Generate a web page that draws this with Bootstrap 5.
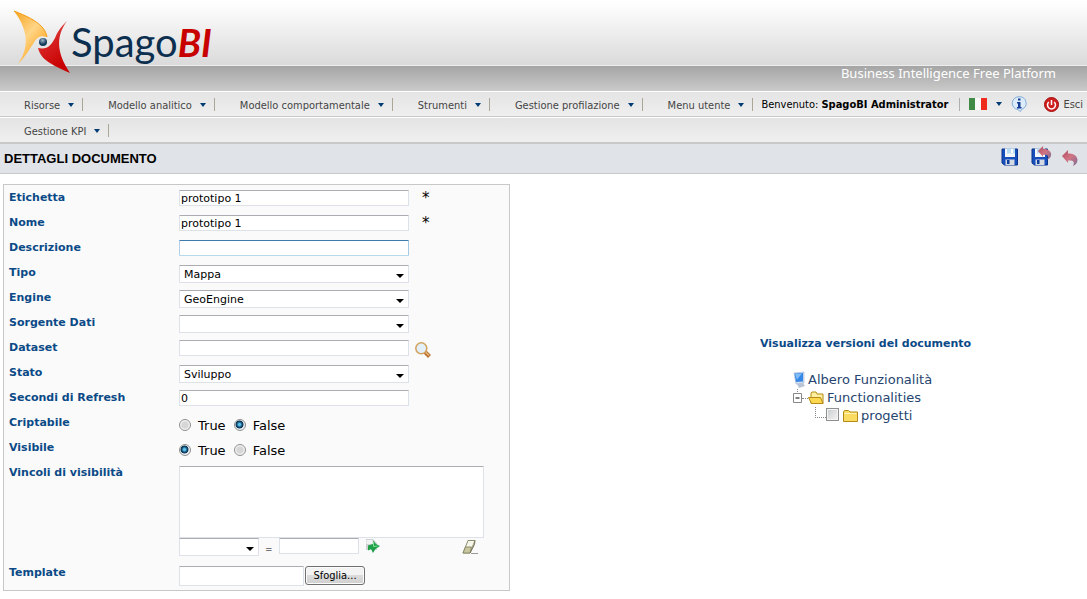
<!DOCTYPE html>
<html lang="it">
<head>
<meta charset="utf-8">
<meta name="viewport" content="width=device-width, initial-scale=1">
<title>SpagoBI - Dettagli documento</title>
<link href="https://cdn.jsdelivr.net/npm/bootstrap@5.3.0/dist/css/bootstrap.min.css" rel="stylesheet">
<style>
:root { --verdana: "DejaVu Sans", Verdana, sans-serif; --tahoma: "DejaVu Sans Condensed", "DejaVu Sans", Tahoma, sans-serif; }
body { font-family: var(--verdana); font-size: 11px; line-height: 15px; color: #000; }
svg { display: block; flex: none; }
.site-head { height: 66px; background: linear-gradient(#fff 0%, #fbfbfb 15%, #dadada 100%); border-bottom: 1px solid #ededed; }
.brand-link { padding: 10px 0 0 13px; text-decoration: none; }
.brand-mark { width: 58px; height: 64px; }
.wordmark { font: 40px/44px "Lato", sans-serif; color: #0c2f50; padding-top: 10px; }
.wordmark b { font-weight: 700; font-style: italic; color: #c80000; font-size: 38px; }
.tagline-bar { height: 25px; background: linear-gradient(#a5a5a5, #cacaca); padding: 0 31px; color: #fff; font: 400 13px/15px "Noto Sans", sans-serif; }
.menu-row { height: 26px; border-top: 1px solid #fff; border-bottom: 1px solid #c8c8c8; background: linear-gradient(#e4e4e4, #efefef); font-family: var(--tahoma); }
.menu-row + .menu-row { border-bottom: 2px solid #c8c8c8; height: 27px; }
.menu-btn { border: 0; background: none; padding: 2px 0 0; color: #454545; font-size: 11px; line-height: 15px; gap: 8px; white-space: nowrap; }
.menu-item { height: 13px; border-right: 1px solid #aaa698; padding: 0 8px 0 25px; }
.menu-item:first-child { padding-left: 24px; }
.tri { width: 0; height: 0; border: 3px solid transparent; border-top: 4px solid #003b73; border-bottom: 0; }
.user-end { gap: 9px; padding-right: 4px; }
.user-end .vr { height: 13px; align-self: center; }
.user-end .menu-btn { padding: 0; gap: 9px; }
.exit-link { color: #454545; text-decoration: none; gap: 4px; margin-left: 8px; }
.icon-btn { border: 0; background: none; padding: 0; }
.title-bar { height: 30px; background: #e0e3e8; border-bottom: 1px solid #c8c8c8; padding: 0 8px 0 4px; }
.title-bar h1 { font: bold 13px/16px "Liberation Sans", Arial, sans-serif; margin: 0; }
.form-pane { width: 60%; padding: 10px 0 8px 3px; }
.doc-form { width: 507px; max-width: 100%; border: 1px solid #c8c8c8; background: #fafafa; padding: 0 5px 4px; }
.frow { display: grid; grid-template-columns: 170px 1fr; min-height: 25px; padding-top: 5px; }
.frow > :first-child { font-weight: bold; color: #0b4a87; line-height: 15px; }
.fld { display: block; width: 230px; height: 16px; border: 1px solid #dde1ea; border-top-color: #abadb3; border-radius: 1px; background: #fff; color: #000; font-size: 11px; line-height: 14px; padding: 0 1px; outline: 0; }
.fld:focus { border-color: #3d7bad #a4c9e3 #b7d9ed #b5cfe7; }
select.fld { height: 18px; appearance: none; padding: 1px 20px 0 4px; line-height: 16px; background: #fff url("data:image/svg+xml,%3Csvg xmlns='http://www.w3.org/2000/svg' width='8' height='4'%3E%3Cpath d='M0 0h8L4 4z'/%3E%3C/svg%3E") no-repeat right 4px top 8px; }
.short-fld { width: 80px; }
.file-fld { width: 125px; height: 20px; }
textarea.fld { width: 305px; height: 72px; resize: none; }
.cell-low { padding-top: 1px; }
.star { font-size: 15px; line-height: 16px; margin-left: 13px; }
.radio-line { font-size: 13px; line-height: 18px; padding-top: 2px; }
.radio-line label { margin: 0 8px 0 7px; }
.radio-line input { appearance: none; width: 12px; height: 12px; border: 1px solid #8e8f8f; border-radius: 50%; margin: 0 0 2px; background: radial-gradient(#d6d6d6 40%, #fff 75%); }
.radio-line input:checked { background: radial-gradient(circle at 45% 45%, #62c4ea 0 12%, #155b86 32%, #0a2b46 46%, #e8eef2 56%); }
.bound-line { gap: 6px; padding-right: 25px; }
.bound-line > span { padding-top: 5px; font-size: 9px; line-height: 12px; }
.browse { border: 1px solid #707070; border-radius: 3px; background: linear-gradient(#f3f3f3 0 45%, #dcdcdc 50%, #cfcfcf); box-shadow: inset 0 0 0 1px #fbfbfb; width: 60px; height: 19px; padding: 0; font-size: 11px; line-height: 15px; font-family: var(--tahoma); margin-left: 1px; }
.find-btn { margin-left: 6px; }
.tree-pane { padding-right: 8px; margin-top: 162px; }
.versions { font-weight: bold; color: #0b4a87; text-decoration: none; }
.tree { font-size: 13px; line-height: 18px; color: #26456f; margin-top: 20px; width: 149px; }
.tree ul { list-style: none; margin: 0; padding: 0; }
.tnode { height: 18px; }
.tree svg { margin-right: -1px; }
.expander { margin-left: 2px; }
.dots-h { border-top: 1px dotted #888; width: 6px; }
.elbow { border-left: 1px dotted #888; border-bottom: 1px dotted #888; width: 11px; height: 11px; margin: 0 0 8px 24px; }
.tree input { appearance: none; width: 13px; height: 13px; margin: 0 4px 4px 0; border: 1px solid #8e8f8f; background: linear-gradient(135deg, #c8ccd0, #f4f4f4); box-shadow: inset 0 0 0 1px #f4f4f4; }
.tree label { margin-left: 2px; }
</style>
</head>
<body>
<header>
  <div class="site-head d-flex align-items-start">
    <a class="brand-link d-flex position-relative" href="#">
      <svg class="brand-mark" viewBox="0 0 58 64" aria-hidden="true">
        <defs>
          <linearGradient id="og" x1="0" y1="0" x2=".7" y2="1"><stop offset="0" stop-color="#f5a21b"/><stop offset=".5" stop-color="#ffd587"/><stop offset="1" stop-color="#ff9d0a"/></linearGradient>
          <linearGradient id="rg" x1="0" y1="0" x2=".5" y2="1"><stop offset="0" stop-color="#e88"/><stop offset=".5" stop-color="#d62020"/><stop offset="1" stop-color="#c80000"/></linearGradient>
          <radialGradient id="bg" cx=".45" cy=".3"><stop offset="0" stop-color="#9eb9cc"/><stop offset="1" stop-color="#123a5a"/></radialGradient>
        </defs>
        <path d="M1 1C16 7 32 14 34 27C24 24 23 30 18 37C13 45 9 50 5 54C15 40 17 22 1 1Z" fill="url(#og)"/>
        <path d="M1 1C16 7 32 14 34 27" fill="none" stroke="#f59a10"/>
        <path d="M54 11C43 26 43 42 57 63C42 56 28 51 25 38C35 40 38 35 42 28C45 20 50 15 54 11Z" fill="url(#rg)"/>
        <circle cx="30" cy="32" r="4" fill="url(#bg)"/>
      </svg>
      <span class="wordmark">Spago<b>BI</b></span>
    </a>
  </div>
  <div class="tagline-bar text-end">Business Intelligence Free Platform</div>
</header>
<nav aria-label="Menu principale">
  <div class="menu-row d-flex align-items-center">
    <div class="menu-item d-flex align-items-center"><button class="menu-btn d-flex align-items-center" type="button">Risorse<span class="tri"></span></button></div>
    <div class="menu-item d-flex align-items-center"><button class="menu-btn d-flex align-items-center" type="button">Modello analitico<span class="tri"></span></button></div>
    <div class="menu-item d-flex align-items-center"><button class="menu-btn d-flex align-items-center" type="button">Modello comportamentale<span class="tri"></span></button></div>
    <div class="menu-item d-flex align-items-center"><button class="menu-btn d-flex align-items-center" type="button">Strumenti<span class="tri"></span></button></div>
    <div class="menu-item d-flex align-items-center"><button class="menu-btn d-flex align-items-center" type="button">Gestione profilazione<span class="tri"></span></button></div>
    <div class="menu-item d-flex align-items-center"><button class="menu-btn d-flex align-items-center" type="button">Menu utente<span class="tri"></span></button></div>
    <div class="text-nowrap ps-2">Benvenuto: <b>SpagoBI Administrator</b></div>
    <div class="user-end d-flex align-items-center ms-auto">
      <span class="vr"></span>
      <button class="menu-btn d-flex align-items-center" type="button" aria-label="Lingua">
        <svg width="18" height="12"><path fill="#3f8b45" d="M0 0h6v12H0z"/><path fill="#f8f8f8" d="M6 0h6v12H6z"/><path fill="#f02a1d" d="M12 0h6v12h-6z"/></svg><span class="tri"></span></button>
      <button class="icon-btn" type="button" aria-label="Informazioni">
        <svg width="16" height="16" viewBox="0 0 16 16"><path d="M8 .7a7 6.500 0 0 1 2.800 12.500L9.500 15.500 7 13.600A7 6.500 0 0 1 8 .7Z" fill="#dcecfb" stroke="#82abd8"/><path d="M7 2.500h2.500v2H7zM6 6h3.500v5h1v1.500H6V11h1V7.500H6z" fill="#163e94"/></svg></button>
      <a class="exit-link d-flex align-items-center" href="#">
        <svg width="15" height="15" viewBox="0 0 15 15"><circle cx="7.500" cy="7.500" r="7" fill="#cf1e1e" stroke="#a30c0c"/><path d="M4.800 5a4 4 0 1 0 5.400 0M7.500 3v5" fill="none" stroke="#fff" stroke-width="1.500"/></svg>Esci</a>
    </div>
  </div>
  <div class="menu-row d-flex align-items-center">
    <div class="menu-item d-flex align-items-center"><button class="menu-btn d-flex align-items-center" type="button">Gestione KPI<span class="tri"></span></button></div>
  </div>
</nav>
<div class="title-bar d-flex align-items-center justify-content-between">
  <h1>DETTAGLI DOCUMENTO</h1>
  <div class="d-flex pb-1">
    <svg width="0" height="0" aria-hidden="true"><defs>
      <linearGradient id="ug" x1="0" y1="0" x2="1" y2="1"><stop offset="0" stop-color="#b04a5c"/><stop offset=".5" stop-color="#d07584"/><stop offset="1" stop-color="#7d6a92"/></linearGradient>
      <g id="disk"><path d="M1 3h15.500v16H3.500L1 17z" fill="#174fbd" stroke="#0b348e"/><path d="M4 2.500h10V11H4z" fill="#f4f8fb"/><path d="M6 2.500h8v5H6z" fill="#b8dcf2"/><path d="M10 3h2v4h-2z" fill="#fff"/><path d="M4.500 13.500h9V19h-9z" fill="#d5d9e2"/><path d="M6 14h2.500v4H6z" fill="#0c3d9e"/></g>
      <path id="undo" d="M0 6 6 0v3.500c6-.5 9.500 3 9.500 6.500 0 3-2 5-4.500 6 2-4 .5-6-5-5.500V13z" fill="url(#ug)"/>
    </defs></svg>
    <button class="icon-btn" type="button" aria-label="Salva"><svg width="30" height="22"><use href="#disk"/></svg></button>
    <button class="icon-btn" type="button" aria-label="Salva e torna indietro"><svg width="30" height="22"><use href="#disk"/><use href="#undo" transform="translate(7 0) scale(.85)"/></svg></button>
    <button class="icon-btn" type="button" aria-label="Indietro"><svg width="18" height="22"><use href="#undo" transform="translate(1 4)"/></svg></button>
  </div>
</div>
<main class="d-flex align-items-start">
  <div class="form-pane flex-shrink-0">
    <form class="doc-form">
      <div class="frow"><label for="etichetta">Etichetta</label><div class="d-flex"><input class="fld" id="etichetta" value="prototipo 1"><span class="star">*</span></div></div>
      <div class="frow"><label for="nome">Nome</label><div class="d-flex"><input class="fld" id="nome" value="prototipo 1"><span class="star">*</span></div></div>
      <div class="frow"><label for="descr">Descrizione</label><div><input class="fld" id="descr" autofocus></div></div>
      <div class="frow"><label for="tipo">Tipo</label><div><select class="fld" id="tipo"><option>Mappa</option></select></div></div>
      <div class="frow"><label for="engine">Engine</label><div><select class="fld" id="engine"><option>GeoEngine</option></select></div></div>
      <div class="frow"><label for="sorg">Sorgente Dati</label><div><select class="fld" id="sorg"><option></option></select></div></div>
      <div class="frow"><label for="dataset">Dataset</label><div class="d-flex"><input class="fld" id="dataset">
        <button class="icon-btn find-btn" type="button" aria-label="Cerca"><svg width="16" height="16" viewBox="0 0 16 16"><path d="m10 10 4.500 4.500" stroke="#b9722f" stroke-width="4"/><path d="m10.500 10 3.500 3.500" stroke="#e8b878" stroke-width="1.500"/><circle cx="6.300" cy="6.300" r="5.500" fill="#e3f0fa" stroke="#d3a15c" stroke-width="1.500"/></svg></button></div></div>
      <div class="frow"><label for="stato">Stato</label><div><select class="fld" id="stato"><option>Sviluppo</option></select></div></div>
      <div class="frow"><label for="refresh">Secondi di Refresh</label><div><input class="fld" id="refresh" value="0"></div></div>
      <div class="frow" role="radiogroup" aria-labelledby="cr"><span id="cr">Criptabile</span><div class="radio-line d-flex align-items-center"><input type="radio" name="cr" id="cr1"><label for="cr1">True</label><input type="radio" name="cr" id="cr2" checked><label for="cr2">False</label></div></div>
      <div class="frow" role="radiogroup" aria-labelledby="vi"><span id="vi">Visibile</span><div class="radio-line d-flex align-items-center"><input type="radio" name="vi" id="vi1" checked><label for="vi1">True</label><input type="radio" name="vi" id="vi2"><label for="vi2">False</label></div></div>
      <div class="frow pb-1"><label for="vincoli">Vincoli di visibilità</label><div class="cell-low">
        <textarea class="fld" id="vincoli"></textarea>
        <div class="bound-line d-flex align-items-start">
          <select class="fld short-fld" aria-label="Attributo"><option></option></select>
          <span>=</span>
          <input class="fld short-fld" aria-label="Valore">
          <button class="icon-btn" type="button" aria-label="Aggiungi"><svg width="16" height="16" viewBox="0 0 16 16"><path d="M1 1h7l4 4v7H1z" fill="#cfd3d5"/><path d="M1.500 2h6v4h-6z" fill="#f1f3f3"/><path d="M3 7.500 8 6V2.500l3 3.500 4 2-4.500 3L8 15l-2-4-3 1.500z" fill="#1fa048"/><path d="M8.500 4v4.500l4-.5" fill="none" stroke="#7fe093"/></svg></button>
          <button class="icon-btn ms-auto" type="button" aria-label="Cancella"><svg width="17" height="18" viewBox="0 0 17 18"><path d="M6 2.500h7L8 15H1z" fill="#f6f6ea" stroke="#8e8d6d"/><path d="M3.500 9h6L8 15H1z" fill="#c9c7a0" stroke="#8e8d6d"/><path d="m13 2.500-.5 4L8 15" fill="none" stroke="#77765a"/><path d="M9 15.500h7" stroke="#999"/></svg></button>
        </div></div></div>
      <div class="frow"><label for="tpl">Template</label><div class="cell-low d-flex"><input class="fld file-fld" id="tpl"><button class="browse" type="button">Sfoglia...</button></div></div>
    </form>
  </div>
  <section class="tree-pane flex-grow-1 d-flex flex-column align-items-center">
    <a class="versions" href="#">Visualizza versioni del documento</a>
    <div class="tree">
      <div class="tnode d-flex align-items-center"><svg width="18" height="18" viewBox="0 0 18 18"><path d="M3 2l10-1v11l-8 1z" fill="#d5dfef" stroke="#9aaed0" stroke-width=".6"/><path d="M3.500 2.500 12 2v8.500l-7 .5z" fill="#3688e6"/><path d="m4 3 7-.5-5 6z" fill="#7fbcf7"/><path d="m6 13 6-1 2 3-6 2z" fill="#b9c3d6"/></svg>Albero Funzionalità</div>
      <ul>
        <li>
          <div class="tnode d-flex align-items-center"><svg class="expander" width="10" height="18"><path d="M4.500 0v4" stroke="#888" stroke-dasharray="1 1"/><path d="M.5 4.500h8v9h-8z" fill="#fff" stroke="#888"/><path d="M2.500 9h4" stroke="#000"/></svg><span class="dots-h"></span>
            <svg width="20" height="14" viewBox="0 0 20 14"><path d="M3 12.500V2l1-1h4l1 2h6v9.500z" fill="#fff0a0" stroke="#b58a17"/><path d="M.500 6.500h12l2.500 6H3.500z" fill="#fbd84f" stroke="#b58a17"/></svg>Functionalities</div>
          <ul><li class="tnode d-flex align-items-center"><span class="elbow"></span><input type="checkbox" id="prog">
            <svg width="17" height="14" viewBox="0 0 17 14"><path d="M.500 12.500V3l1-1.500h4L7 3h7.500v9.500z" fill="#fbdc62" stroke="#b58a17"/><path d="M1.500 4.500h12" stroke="#fff3b8"/></svg><label for="prog">progetti</label></li></ul>
        </li>
      </ul>
    </div>
  </section>
</main>
<script src="https://cdn.jsdelivr.net/npm/bootstrap@5.3.0/dist/js/bootstrap.bundle.min.js"></script>
</body>
</html>
